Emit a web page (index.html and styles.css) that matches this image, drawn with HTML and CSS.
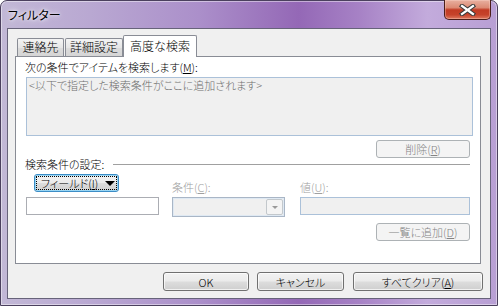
FILE: index.html
```html
<!DOCTYPE html>
<html lang="ja">
<head>
<meta charset="utf-8">
<title>フィルター</title>
<link rel="stylesheet" href="styles.css">
</head>
<body>
<div class="window">
  <div class="titlebar">
    <span class="title">フィルター</span>
    <span class="close">
      <svg width="17" height="12" viewBox="0 0 17 12">
        <path d="M3 2 L14 10 M14 2 L3 10" stroke="#3b3b3b" stroke-width="4.4" stroke-linecap="square" fill="none"/>
        <path d="M3 2 L14 10 M14 2 L3 10" stroke="#ffffff" stroke-width="2.2" stroke-linecap="square" fill="none"/>
      </svg>
    </span>
  </div>
  <div class="client">
    <div class="tabs">
      <div class="tab t1">連絡先</div>
      <div class="tab t2">詳細設定</div>
      <div class="tab active">高度な検索</div>
    </div>
    <div class="panel">
      <div class="label">次の条件でアイテムを検索します(<u>M</u>):</div>
      <div class="criteria">&lt;以下で指定した検索条件がここに追加されます&gt;</div>
      <div class="btn-row"><span class="btn disabled"><span>削除(<u>R</u>)</span></span></div>
      <div class="section"><span>検索条件の設定:</span><span class="rule"></span></div>
      <div class="cond">
        <span class="btn field"><span class="focus"><span>フィールド(<u>I</u>)</span><span class="tri"></span></span></span>
        <span class="lbl dis">条件(<u>C</u>):</span>
        <span class="lbl dis">値(<u>U</u>):</span>
        <span class="input"></span>
        <span class="combo"><span class="drop"><span class="tri small"></span></span></span>
        <span class="input dis"></span>
      </div>
      <div class="btn-row add"><span class="btn disabled"><span>一覧に追加(<u>D</u>)</span></span></div>
    </div>
    <div class="footer">
      <span class="btn ok"><span>OK</span></span>
      <span class="btn cancel"><span>キャンセル</span></span>
      <span class="btn clear"><span>すべてクリア(<u>A</u>)</span></span>
    </div>
  </div>
</div>
</body>
</html>
```

FILE: styles.css
```css
* { box-sizing: border-box; }
html, body { margin: 0; padding: 0; }
body {
  width: 498px;
  height: 306px;
  overflow: hidden;
  background: #ffffff;
  font-family: "Noto Sans CJK JP", "Noto Sans", sans-serif;
  font-size: 11px;
  font-weight: 300;
  font-feature-settings: "palt";
  color: #000;
}
u { text-decoration: underline; text-underline-offset: 1px; }

.window {
  width: 498px;
  height: 306px;
  display: flex;
  flex-direction: column;
  border: 1px solid #4b405e;
  border-radius: 7px 7px 0 0;
  background: linear-gradient(to right, #c2b8d6 0%, #b9a8d2 18%, #ab8fca 40%, #9468b6 60%, #a681c5 72%, #c3abdc 86%, #b89fd4 100%);
  box-shadow: inset 0 0 0 1px rgba(255,255,255,0.45);
}
.titlebar {
  height: 27px;
  display: flex;
  justify-content: space-between;
  align-items: flex-start;
}
.title {
  margin: 6px 0 0 7px;
  font-size: 12px;
  font-weight: 400;
  line-height: 16px;
  text-shadow: 0 0 6px #fff, 0 0 3px rgba(255,255,255,0.9);
}
.close {
  width: 47px;
  height: 20px;
  margin: -1px 6px 0 0;
  border: 1px solid #4a1e1a;
  border-top: none;
  border-radius: 0 0 5px 5px;
  background: linear-gradient(#e8b0a0 0%, #dc8a74 40%, #c23b24 52%, #c6432b 78%, #df7a60 100%);
  box-shadow: inset 0 0 0 1px rgba(255,220,210,0.35);
  display: flex;
  align-items: center;
  justify-content: center;
}

.client {
  flex: 1;
  margin: 0 6px 6px 6px;
  border: 1px solid #67637a;
  background: #f0f0f0;
  display: flex;
  flex-direction: column;
}

.tabs {
  margin: 6px 0 0 9px;
  height: 21px;
  display: flex;
  align-items: flex-end;
  font-size: 12px;
}
.tab {
  height: 18px;
  border: 1px solid #898c95;
  border-bottom: none;
  border-radius: 2px 2px 0 0;
  background: linear-gradient(#f4f4f4, #e6e6e6 50%, #dcdcdc 50%, #d5d5d5);
  line-height: 16px;
  text-align: center;
  white-space: nowrap;
}
.t1 { width: 47px; margin-right: 1px; }
.t2 { width: 58px; }
.tab.active {
  width: 74px;
  height: 22px;
  margin-bottom: -1px;
  background: #ffffff;
  line-height: 19px;
  position: relative;
  z-index: 1;
}

.panel {
  margin-left: 7px;
  width: 466px;
  height: 208px;
  border: 1px solid #898c95;
  background: #ffffff;
  display: flex;
  flex-direction: column;
  padding: 2px 9px 0 9px;
}
.label {
  height: 16px;
  line-height: 16px;
  white-space: nowrap;
}
.criteria {
  margin: 2px 0 0 1px;
  width: 447px;
  height: 59px;
  border: 1px solid #abc1d9;
  background: #f0f0f0;
  color: #6d6d6d;
  padding: 0 0 0 2px;
  line-height: 15px;
  white-space: nowrap;
}
.btn-row {
  display: flex;
  justify-content: flex-end;
  padding-right: 1px;
  margin-top: 4px;
}
.btn {
  display: flex;
  align-items: center;
  justify-content: center;
  height: 19px;
  border: 1px solid #707070;
  border-radius: 3px;
  background: linear-gradient(#f2f2f2, #ebebeb 48%, #dddddd 52%, #cfcfcf);
  box-shadow: inset 0 0 0 1px rgba(255,255,255,0.7);
  white-space: nowrap;
  line-height: 14px;
}
.btn.disabled {
  width: 94px;
  height: 18px;
  border-color: #adb2b5;
  background: #f4f4f4;
  box-shadow: none;
  color: #838383;
}
.section {
  display: flex;
  align-items: center;
  height: 13px;
  line-height: 13px;
}
.section .rule {
  flex: 1;
  height: 1px;
  margin: 0 1px 0 9px;
  background: #a0a0a0;
}
.cond {
  display: grid;
  grid-template-columns: 133px 113px 172px;
  grid-template-rows: 23px 20px;
  column-gap: 13px;
  margin: 3px 0 0 1px;
}
.cond > :nth-child(3), .cond > :nth-child(6) { margin-left: 2px; }
.btn.field {
  width: 85px;
  height: 18px;
  margin-left: 8px;
  align-self: start;
  border-color: #3c8dc6;
  background: linear-gradient(#f2f2f2, #ebebeb 48%, #dddddd 52%, #cfcfcf);
  box-shadow: inset 0 0 0 1px #9ad6f4;
  padding: 2px;
}
.focus {
  flex: 1;
  align-self: stretch;
  outline: 1px dotted #000;
  display: flex;
  align-items: center;
  justify-content: center;
  gap: 7px;
  padding-left: 3px;
}
.tri {
  width: 0;
  height: 0;
  border-left: 5px solid transparent;
  border-right: 5px solid transparent;
  border-top: 5px solid #000;
}
.tri.small {
  border-left-width: 3px;
  border-right-width: 3px;
  border-top: 3px solid #9a9a9a;
}
.lbl {
  align-self: end;
  line-height: 14px;
  margin-bottom: 3px;
  white-space: nowrap;
}
.dis { color: #a0a0a0; }
.input {
  height: 18px;
  border: 1px solid #abadb3;
  background: #ffffff;
}
.input.dis {
  border-color: #abc1d9;
  background: #f0f0f0;
}
.combo {
  height: 20px;
  border: 1px solid #a9b6c6;
  background: #f0f0f0;
  box-shadow: inset 0 0 0 1px #dfe9f3;
  display: flex;
  justify-content: flex-end;
  padding: 1px;
}
.drop {
  width: 17px;
  border: 1px solid #c3c8cc;
  border-radius: 2px;
  background: #f4f4f4;
  display: flex;
  align-items: center;
  justify-content: center;
}
.btn-row.add { margin-top: 6px; }

.footer {
  margin-top: 8px;
  display: flex;
  justify-content: flex-end;
  padding-right: 7px;
  gap: 8px;
}
.ok { width: 86px; }
.cancel { width: 87px; margin-right: 1px; }
.clear { width: 130px; }
```
